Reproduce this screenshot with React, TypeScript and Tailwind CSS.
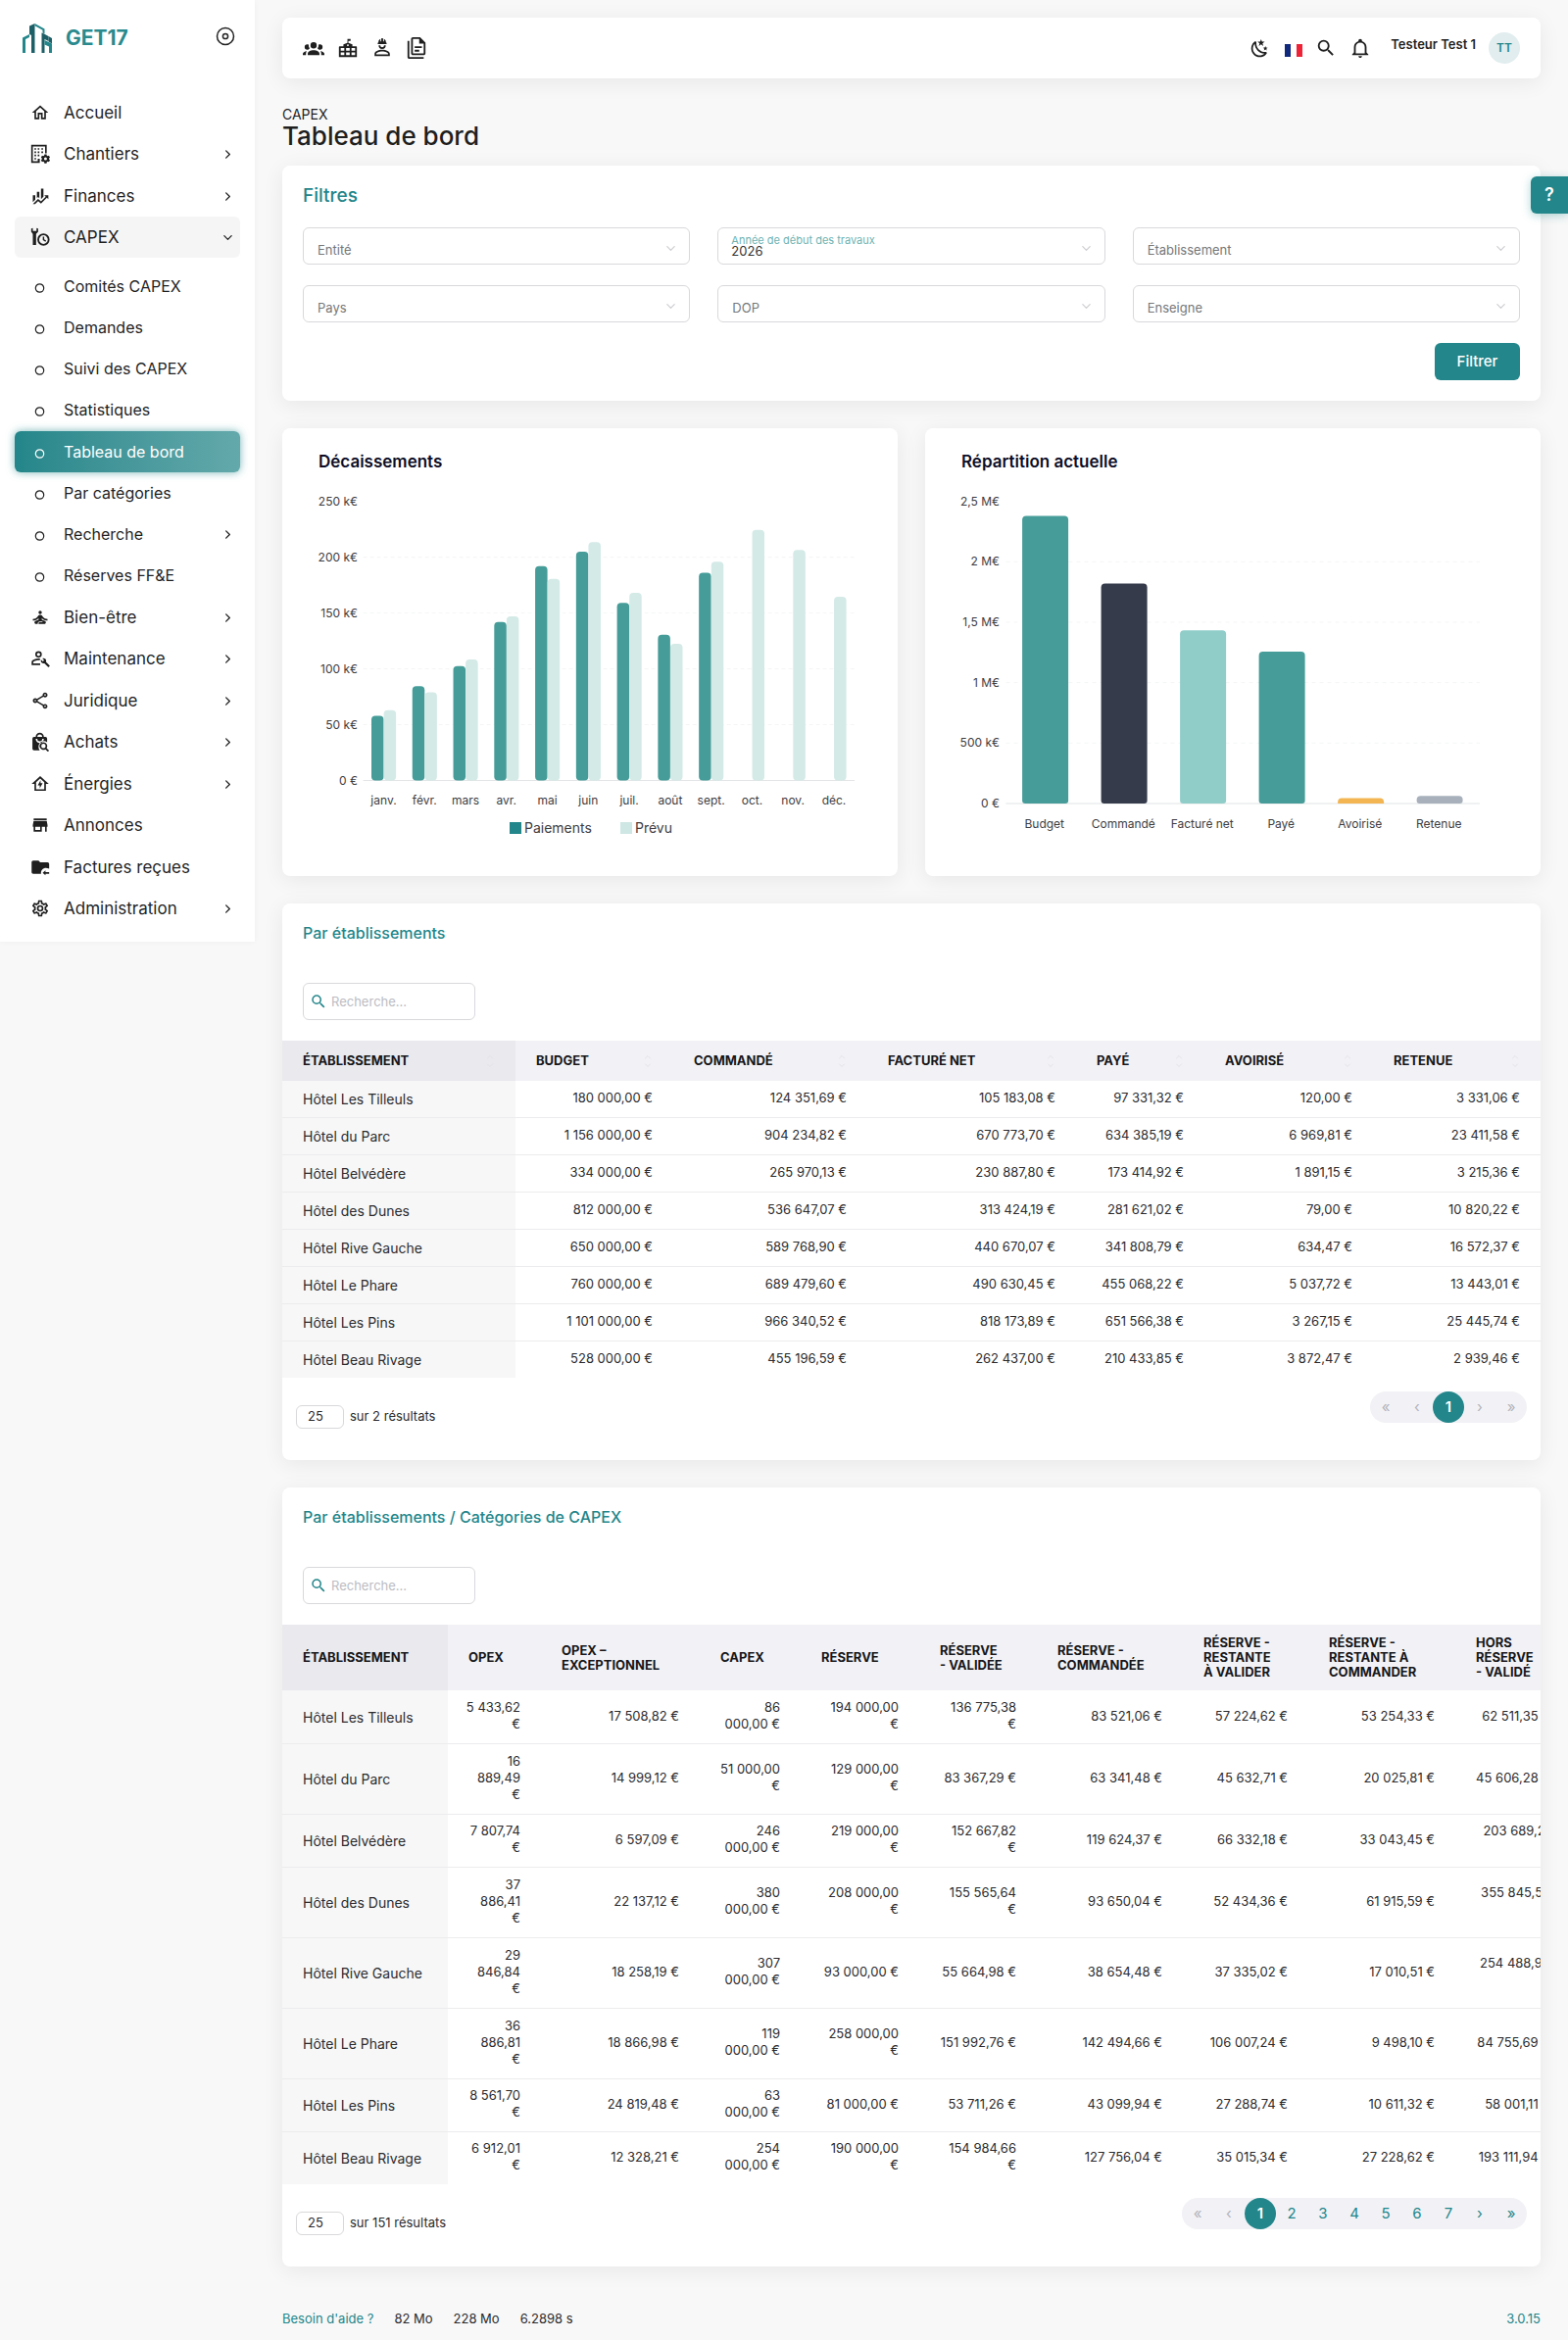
import React from "react";

const TEAL = "#23868a";

/* ---------- icons ---------- */

function Icon({ children, className = "size-5" }: { children: React.ReactNode; className?: string }) {
  return (
    <svg viewBox="0 0 24 24" fill="currentColor" aria-hidden="true" className={`${className} shrink-0`}>
      {children}
    </svg>
  );
}

const gearTeeth = "M17.2 12.5h2.6l.3 1.5 1.2.7 1.4-.5 1.3 2.2-1.1 1v1.3l1.1 1-1.3 2.2-1.4-.5-1.2.7-.3 1.5h-2.6l-.3-1.5-1.2-.7-1.4.5-1.3-2.2 1.1-1v-1.3l-1.1-1 1.3-2.2 1.4.5 1.2-.7zM18.5 16.2a1.8 1.8 0 1 0 0 3.6 1.8 1.8 0 0 0 0-3.6z";

const icons = {
  home: <path d="M12 5.69L17 10.19V18H15V12H9V18H7V10.19L12 5.69M12 3L2 12H5V20H11V14H13V20H19V12H22" />,
  building: (
    <>
      <path d="M1 1H20V11.5H18V3H3V21H9V18H11.5V23H1Z" />
      <path d="M5 5h2v2H5zM9 5h2v2H9zM13.500 5h2v2h-2zM5 9h2v2H5zM9 9h2v2H9zM13.500 9h2v2h-2zM5 13h2v2H5zM9 13h2v2H9zM5 17h2v2H5z" />
      <path fillRule="evenodd" d={gearTeeth} />
    </>
  ),
  finance: (
    <path d="M6,16.5L3,19.44V11H6M11,14.66L9.43,13.32L8,14.64V7H11M16,13L13,16V3H16M18.81,12.81L17,11H22V16L20.21,14.21L13,21.36L9.53,18.34L5.75,22H3L9.47,15.66L13,18.64" />
  ),
  wrenchClock: (
    <>
      <path d="M1 1.500V5.500L3 8V21.500H7V8L9.500 5.500V1.500L7.500 .8V4.500H3V.8Z" />
      <path fillRule="evenodd" d="M16 7.500a7.500 7.500 0 1 0 0 15 7.500 7.500 0 0 0 0-15zm0 2.200a5.300 5.300 0 1 1 0 10.600 5.300 5.300 0 0 1 0-10.600z" />
      <path d="M15.200 11.500h1.700v3.300l2.400 1.400-.9 1.400-3.200-1.900z" />
    </>
  ),
  meditation: (
    <path d="M12 4C13.11 4 14 4.89 14 6C14 7.11 13.11 8 12 8S10 7.11 10 6C10 4.9 10.9 4 12 4M21 16V14C18.76 14 16.84 13.04 15.4 11.32L14.06 9.72C13.68 9.26 13.12 9 12.53 9H11.5C10.89 9 10.33 9.26 9.95 9.72L8.61 11.32C7.16 13.04 5.24 14 3 14V16C5.77 16 8.19 14.83 10 12.75V15L6.12 16.55C5.45 16.82 5 17.5 5 18.21C5 19.2 5.8 20 6.79 20H9V19.5C9 18.12 10.12 17 11.5 17H14.5C14.78 17 15 17.22 15 17.5C15 17.78 14.78 18 14.5 18H11.5C10.67 18 10 18.67 10 19.5V20H17.21C18.2 20 19 19.2 19 18.21C19 17.5 18.55 16.82 17.88 16.55L14 15V12.75C15.81 14.83 18.23 16 21 16Z" />
  ),
  accountWrench: (
    <>
      <path fillRule="evenodd" d="M10 3a4 4 0 1 0 0 8 4 4 0 0 0 0-8zm0 2a2 2 0 1 1 0 4 2 2 0 0 1 0-4z" />
      <path d="M10 12c-3 0-8.500 1.500-8.500 4.500V20H12v-2H3.500v-1.500c0-.9 3.500-2.500 6.500-2.500h1.500l.5-1.900A12 12 0 0 0 10 12z" />
      <path d="M23.600 20.600l-4.500-4.500c.5-1.200.2-2.500-.7-3.400-1-1-2.500-1.200-3.700-.6l2.100 2.100-1.500 1.500-2.200-2.100c-.6 1.100-.3 2.700.7 3.600.9.900 2.300 1.200 3.400.7l4.600 4.500c.2.200.5.200.7 0l1.100-1.100c.3-.2.3-.6 0-.7z" />
    </>
  ),
  share: (
    <path
      fillRule="evenodd"
      d="M18 2C16.35 2 15 3.35 15 5C15 5.24 15.04 5.47 15.09 5.7L8.04 9.81C7.5 9.31 6.79 9 6 9C4.35 9 3 10.35 3 12C3 13.65 4.35 15 6 15C6.79 15 7.5 14.69 8.04 14.19L15.16 18.34C15.11 18.55 15.08 18.77 15.08 19C15.08 20.61 16.39 21.91 18 21.91C19.61 21.91 20.92 20.61 20.92 19C20.92 17.39 19.61 16.08 18 16.08C17.24 16.08 16.56 16.38 16.04 16.85L8.91 12.7C8.96 12.47 9 12.24 9 12C9 11.76 8.96 11.53 8.91 11.3L15.96 7.19C16.5 7.69 17.21 8 18 8C19.65 8 21 6.65 21 5C21 3.35 19.65 2 18 2M18 4C18.55 4 19 4.45 19 5C19 5.55 18.55 6 18 6C17.45 6 17 5.55 17 5C17 4.45 17.45 4 18 4M6 11C6.55 11 7 11.45 7 12C7 12.55 6.55 13 6 13C5.45 13 5 12.55 5 12C5 11.45 5.45 11 6 11M18 18C18.55 18 19 18.45 19 19C19 19.55 18.55 20 18 20C17.45 20 17 19.55 17 19C17 18.45 17.45 18 18 18Z"
    />
  ),
  shopping: (
    <>
      <path d="M11.500 1A5 5 0 0 0 6.500 6H4.500a2 2 0 0 0-2 2v12.500a2 2 0 0 0 2 2h7a7 7 0 0 1-1.500-4.800 6.500 6.500 0 0 1 10.500-5V8a2 2 0 0 0-2-2h-2a5 5 0 0 0-5-5zm0 2a3 3 0 0 1 3 3h-6a3 3 0 0 1 3-3zm-5 5.500h2a3 3 0 0 0 6 0h2a5 5 0 0 1-10 0z" />
      <path fillRule="evenodd" d="M16 12.500a4.700 4.700 0 1 0 2.400 8.700l3 3 1.500-1.500-3-3a4.700 4.700 0 0 0-3.900-7.200zm0 2a2.700 2.700 0 1 1 0 5.400 2.700 2.700 0 0 1 0-5.400z" />
    </>
  ),
  homeBolt: (
    <>
      <path fillRule="evenodd" d="M12 2.500L1.500 12H5V20.500H19V12H22.500L12 2.500M12 5.400L17 10V18.500H7V10L12 5.400Z" />
      <path d="M11.500 17.500V13.800H9L12.500 7.500V11.200H15L11.500 17.500Z" />
    </>
  ),
  store: <path d="M12,18H6V14H12M21,14V12L20,7H4L3,12V14H4V20H14V14H18V20H20V14M20,4H4V6H20V4Z" />,
  folder: (
    <>
      <path d="M13 19C13 19.34 13.04 19.67 13.09 20H3.500C2.400 20 1.500 19.110 1.500 18V6C1.500 4.890 2.390 4 3.500 4H10L12 6H21C22.100 6 23 6.890 23 8V13.810C21.500 13.300 20.100 13 19 13C15.690 13 13 15.690 13 19" />
      <path d="M18.500 16L15 19L18.500 22V20H23V18H18.500Z" />
    </>
  ),
  cog: (
    <path d="M12,8A4,4 0 0,1 16,12A4,4 0 0,1 12,16A4,4 0 0,1 8,12A4,4 0 0,1 12,8M12,10A2,2 0 0,0 10,12A2,2 0 0,0 12,14A2,2 0 0,0 14,12A2,2 0 0,0 12,10M10,22C9.75,22 9.54,21.82 9.5,21.58L9.13,18.93C8.5,18.68 7.96,18.34 7.44,17.94L4.95,18.95C4.73,19.03 4.46,18.95 4.34,18.73L2.34,15.27C2.21,15.05 2.27,14.78 2.46,14.63L4.57,12.97L4.5,12L4.57,11L2.46,9.37C2.27,9.22 2.21,8.95 2.34,8.73L4.34,5.27C4.46,5.05 4.73,4.96 4.95,5.05L7.44,6.05C7.96,5.66 8.5,5.32 9.13,5.07L9.5,2.42C9.54,2.18 9.75,2 10,2H14C14.25,2 14.46,2.18 14.5,2.42L14.87,5.07C15.5,5.32 16.04,5.66 16.56,6.05L19.05,5.05C19.27,4.96 19.54,5.05 19.66,5.27L21.66,8.73C21.79,8.95 21.73,9.22 21.54,9.37L19.43,11L19.5,12L19.43,13L21.54,14.63C21.73,14.78 21.79,15.05 21.66,15.27L19.66,18.73C19.54,18.95 19.27,19.04 19.05,18.95L16.56,17.95C16.04,18.34 15.5,18.68 14.87,18.93L14.5,21.58C14.46,21.82 14.25,22 14,22H10M11.25,4L10.88,6.61C9.68,6.86 8.62,7.5 7.85,8.39L5.44,7.35L4.69,8.65L6.8,10.2C6.4,11.37 6.4,12.64 6.8,13.8L4.68,15.36L5.43,16.66L7.86,15.62C8.63,16.5 9.68,17.14 10.87,17.38L11.24,20H12.76L13.13,17.39C14.32,17.14 15.37,16.5 16.14,15.62L18.57,16.66L19.32,15.36L17.2,13.81C17.6,12.64 17.6,11.37 17.2,10.2L19.31,8.65L18.56,7.35L16.15,8.39C15.38,7.5 14.32,6.86 13.12,6.62L12.75,4H11.25Z" />
  ),
  group: (
    <path d="M12,5.5A3.5,3.5 0 0,1 15.5,9A3.5,3.5 0 0,1 12,12.5A3.5,3.5 0 0,1 8.5,9A3.5,3.5 0 0,1 12,5.5M5,8C5.56,8 6.08,8.15 6.53,8.42C6.38,9.85 6.8,11.27 7.66,12.38C7.16,13.34 6.16,14 5,14A3,3 0 0,1 2,11A3,3 0 0,1 5,8M19,8A3,3 0 0,1 22,11A3,3 0 0,1 19,14C17.84,14 16.84,13.34 16.34,12.38C17.2,11.27 17.62,9.85 17.47,8.42C17.92,8.15 18.44,8 19,8M5.5,18.25C5.5,16.18 8.41,14.5 12,14.5C15.59,14.5 18.5,16.18 18.5,18.25V20H5.5V18.25M0,20V18.5C0,17.11 1.89,15.94 4.45,15.6C3.86,16.28 3.5,17.22 3.5,18.25V20H0M24,20H20.5V18.25C20.5,17.22 20.14,16.28 19.55,15.6C22.11,15.94 24,17.11 24,18.5V20Z" />
  ),
  townHall: (
    <path
      fillRule="evenodd"
      d="M21 10H17V8L12.5 6.2V4H15V2H11.5V6.2L7 8V10H3C2.45 10 2 10.45 2 11V22H22V11C22 10.45 21.55 10 21 10M8 20H4V17H8V20M8 15H4V12H8V15M12 8C12.55 8 13 8.45 13 9S12.55 10 12 10 11 9.55 11 9 11.45 8 12 8M14 20H10V17H14V20M14 15H10V12H14V15M20 20H16V17H20V20M20 15H16V12H20V15Z"
    />
  ),
  hardHat: (
    <>
      <path fillRule="evenodd" d="M12 14C7.6 14 3.500 15.800 3.500 18.500V21H20.500V18.500C20.500 15.800 16.400 14 12 14M5.400 19.100V18.500C5.400 17.300 8.600 15.900 12 15.900S18.600 17.300 18.600 18.500V19.100Z" />
      <path d="M8 9A4 4 0 0 0 16 9H14.100A2.100 2.100 0 0 1 9.900 9Z" />
      <path d="M11.5 1C11.2 1 11 1.21 11 1.5V4.5H10V2C10 2 7.75 2.86 7.75 5.75C7.75 5.75 7 5.89 7 7.500H17C16.95 5.89 16.25 5.75 16.25 5.75C16.25 2.86 14 2 14 2V4.5H13V1.5C13 1.21 12.81 1 12.5 1H11.5Z" />
    </>
  ),
  files: (
    <path
      fillRule="evenodd"
      d="M16 0H8C6.9 0 6 .9 6 2V18C6 19.1 6.9 20 8 20H20C21.1 20 22 19.1 22 18V6L16 0M20 18H8V2H15V7H20V18M4 4V22H20V24H4C2.9 24 2 23.1 2 22V4H4M10 10V12H18V10H10M10 14V16H15V14H10Z"
    />
  ),
  moon: (
    <path d="M17.75,4.09L15.22,6.03L16.13,9.09L13.5,7.28L10.87,9.09L11.78,6.03L9.25,4.09L12.44,4L13.5,1L14.56,4L17.75,4.09M21.25,11L19.61,12.25L20.2,14.23L18.5,13.06L16.8,14.23L17.39,12.25L15.75,11L17.81,10.95L18.5,9L19.19,10.95L21.25,11M18.97,15.95C19.8,15.87 20.69,17.05 20.16,17.8C19.84,18.25 19.5,18.67 19.08,19.07C15.17,23 8.84,23 4.94,19.07C1.03,15.17 1.03,8.83 4.94,4.93C5.34,4.53 5.76,4.17 6.21,3.85C6.96,3.32 8.14,4.21 8.06,5.04C7.79,7.9 8.75,10.87 10.95,13.06C13.14,15.26 16.1,16.22 18.97,15.95M17.33,17.97C14.5,17.81 11.7,16.64 9.53,14.5C7.36,12.31 6.2,9.5 6.04,6.68C3.23,9.82 3.34,14.64 6.35,17.66C9.37,20.67 14.19,20.78 17.33,17.97Z" />
  ),
  magnify: (
    <path d="M9.5,3A6.5,6.5 0 0,1 16,9.5C16,11.11 15.41,12.59 14.44,13.73L14.71,14H15.5L20.5,19L19,20.5L14,15.5V14.71L13.73,14.44C12.59,15.41 11.11,16 9.5,16A6.5,6.5 0 0,1 3,9.5A6.5,6.5 0 0,1 9.5,3M9.5,5C7,5 5,7 5,9.5C5,12 7,14 9.5,14C12,14 14,12 14,9.5C14,7 12,5 9.5,5Z" />
  ),
  bell: (
    <path
      fillRule="evenodd"
      d="M10 21H14C14 22.1 13.1 23 12 23S10 22.1 10 21M21 19V20H3V19L5 17V11C5 7.9 7 5.2 10 4.3V4C10 2.9 10.9 2 12 2S14 2.9 14 4V4.3C17 5.2 19 7.9 19 11V17L21 19M17 11C17 8.2 14.8 6 12 6S7 8.2 7 11V18H17V11Z"
    />
  ),
};

function Chevron({ className, down = false }: { className: string; down?: boolean }) {
  return (
    <svg viewBox="0 0 12 12" fill="none" stroke="currentColor" strokeWidth="1.400" strokeLinecap="round" strokeLinejoin="round" aria-hidden="true" className={className}>
      <path d={down ? "M2 4l4 4 4-4" : "M4 2l4 4-4 4"} />
    </svg>
  );
}

/* ---------- sidebar ---------- */

type NavEntry = { label: string; icon?: keyof typeof icons; more?: boolean };

const mainNav: NavEntry[] = [
  { label: "Accueil", icon: "home" },
  { label: "Chantiers", icon: "building", more: true },
  { label: "Finances", icon: "finance", more: true },
  { label: "CAPEX", icon: "wrenchClock", more: true },
  { label: "Bien-être", icon: "meditation", more: true },
  { label: "Maintenance", icon: "accountWrench", more: true },
  { label: "Juridique", icon: "share", more: true },
  { label: "Achats", icon: "shopping", more: true },
  { label: "Énergies", icon: "homeBolt", more: true },
  { label: "Annonces", icon: "store" },
  { label: "Factures reçues", icon: "folder" },
  { label: "Administration", icon: "cog", more: true },
];

const capexNav: NavEntry[] = [
  { label: "Comités CAPEX" },
  { label: "Demandes" },
  { label: "Suivi des CAPEX" },
  { label: "Statistiques" },
  { label: "Tableau de bord" },
  { label: "Par catégories" },
  { label: "Recherche", more: true },
  { label: "Réserves FF&E" },
];

function NavRow({ item, open = false, active = false }: { item: NavEntry; open?: boolean; active?: boolean }) {
  const tone = active
    ? "bg-linear-to-r from-[#23868a] to-[#63a9ab] text-white shadow-[0_0_8px_rgba(35,134,138,0.6)]"
    : open
      ? "bg-[#f5f5f5] text-[#1f1f1f]"
      : "text-[#1f1f1f]";
  const size = item.icon ? "text-[17px]" : "text-base";
  return (
    <a href="#" className={`flex h-[42px] items-center gap-3.5 rounded-md pr-[7px] pl-4 ${size} leading-6 ${tone}`}>
      {item.icon ? (
        <Icon>{icons[item.icon]}</Icon>
      ) : (
        <svg viewBox="0 0 20 20" fill="none" stroke="currentColor" strokeWidth="1.200" aria-hidden="true" className="size-5 shrink-0">
          <circle cx="9.500" cy="12" r="4.200" />
        </svg>
      )}
      <span className="flex-1">{item.label}</span>
      {item.more && <Chevron down={open} className="size-[11px]" />}
    </a>
  );
}

function Logo() {
  return (
    <svg viewBox="0 0 30 30" aria-hidden="true" className="size-[30px]">
      <path fill="#23868a" d="M0 30V14.500L7 11V14L3 16V30Z" />
      <path fill="#1d5f66" d="M7 11V2.500L12.500 0V30H9V12Z" />
      <path fill="#23868a" d="M12.500 0L22.500 5.500V10.500L20.500 9.500V6.700L12.500 2.300Z" />
      <path fill="#1d5f66" d="M19.500 30V9.500L21 10l5.500 3V18L22.500 16V30Z" />
      <path fill="#23868a" d="M22.500 17L30 20.500V30H27V23.500L22.500 21.500Z" />
      <path fill="#1d5f66" d="M26.500 13L30 15V20.500L26.500 18.500Z" />
    </svg>
  );
}

function Sidebar() {
  return (
    <aside className="w-[260px] shrink-0 bg-white pb-3 shadow-[0_0_6px_rgba(0,0,0,0.04)]">
      <div className="flex h-[94px] items-start pt-6 pr-5 pl-[23px]">
        <a href="#" className="flex items-center gap-3.5">
          <Logo />
          <span className="text-[21px] leading-[30px] font-bold text-[#2a8a8d]">GET17</span>
        </a>
        <button type="button" aria-label="Épingler le menu" className="mt-[3px] ml-auto">
          <svg viewBox="0 0 20 20" fill="none" stroke="#222" strokeWidth="1.500" className="size-5">
            <circle cx="10" cy="10" r="8.500" />
            <circle cx="10" cy="10" r="2.600" />
          </svg>
        </button>
      </div>
      <nav aria-label="Menu principal">
        <ul className="px-[15px]">
          {mainNav.map((item) => (
            <li key={item.label} className="even:mb-px">
              <NavRow item={item} open={item.label === "CAPEX"} />
              {item.label === "CAPEX" && (
                <ul className="pt-2">
                  {capexNav.map((sub) => (
                    <li key={sub.label} className="nth-[4n]:mb-px">
                      <NavRow item={sub} active={sub.label === "Tableau de bord"} />
                    </li>
                  ))}
                </ul>
              )}
            </li>
          ))}
        </ul>
      </nav>
    </aside>
  );
}

/* ---------- top bar ---------- */

function TopBar() {
  return (
    <header className="flex h-[62px] items-center rounded-lg bg-white px-[21px] text-[#1f1f1f] shadow-[0_4px_22px_rgba(0,0,0,0.07)]">
      <div className="flex items-center gap-[13px]">
        <button type="button" aria-label="Utilisateurs"><Icon className="size-[22px]">{icons.group}</Icon></button>
        <button type="button" aria-label="Établissements"><Icon className="size-[22px]">{icons.townHall}</Icon></button>
        <button type="button" aria-label="Intervenants"><Icon className="size-[22px]">{icons.hardHat}</Icon></button>
        <button type="button" aria-label="Documents"><Icon className="size-[22px]">{icons.files}</Icon></button>
      </div>
      <div className="ml-auto flex items-center gap-[13px]">
        <button type="button" aria-label="Thème sombre"><Icon className="size-[21px]">{icons.moon}</Icon></button>
        <button type="button" aria-label="Langue : français" className="mt-1 ml-0.5">
          <svg viewBox="0 0 18 13" className="h-[13px] w-[18px]">
            <path fill="#10297d" d="M0 0h6v13H0z" />
            <path fill="#fff" d="M6 0h6v13H6z" />
            <path fill="#ee2436" d="M12 0h6v13h-6z" />
          </svg>
        </button>
        <button type="button" aria-label="Rechercher"><Icon className="size-[22px]">{icons.magnify}</Icon></button>
        <button type="button" aria-label="Notifications"><Icon className="size-[22px]">{icons.bell}</Icon></button>
        <span className="mb-1.5 ml-[7px] text-[13px] font-semibold">Testeur Test 1</span>
        <span className="grid size-8 place-items-center rounded-full bg-[#e1edee] text-xs font-semibold text-[#23868a]">TT</span>
      </div>
    </header>
  );
}

/* ---------- filters ---------- */

const filters = [
  { id: "entite", label: "Entité" },
  { id: "annee", label: "Année de début des travaux", value: "2026" },
  { id: "etablissement", label: "Établissement" },
  { id: "pays", label: "Pays" },
  { id: "dop", label: "DOP" },
  { id: "enseigne", label: "Enseigne" },
];

function Filters() {
  return (
    <section className="rounded-lg bg-white p-[21px] shadow-[0_4px_22px_rgba(0,0,0,0.07)]">
      <h2 className="text-[19px] leading-5 font-medium text-[#23868a]">Filtres</h2>
      <form className="mt-[22px]">
        <div className="grid grid-cols-3 gap-x-7 gap-y-[21px]">
          {filters.map((f) => (
            <div key={f.id} className="relative">
              <select
                id={f.id}
                defaultValue={f.value ?? ""}
                className="h-[38px] w-full appearance-none rounded-md border border-[#d9d9dc] bg-white pt-3 pl-[13px] text-[13px] text-[#333]"
              >
                <option value={f.value ?? ""}>{f.value ?? ""}</option>
              </select>
              <label
                htmlFor={f.id}
                className={
                  f.value
                    ? "pointer-events-none absolute top-[7px] left-3.5 text-[11px] leading-3 text-[#6db3b2]"
                    : "pointer-events-none absolute top-[15px] left-[15px] text-[13px] leading-4 text-[#777]"
                }
              >
                {f.label}
              </label>
              <Chevron down className="pointer-events-none absolute top-4 right-3.5 size-[11px] text-[#cfcfd3]" />
            </div>
          ))}
        </div>
        <div className="mt-[21px] flex justify-end">
          <button type="button" className="h-[38px] w-[87px] rounded-md bg-[#23868a] text-[15px] font-medium text-white">Filtrer</button>
        </div>
      </form>
    </section>
  );
}

/* ---------- charts ---------- */

const months = ["janv.", "févr.", "mars", "avr.", "mai", "juin", "juil.", "août", "sept.", "oct.", "nov.", "déc."];
const paid = [58, 84.5, 102.5, 142, 192, 205, 159, 130.5, 186, 0, 0, 0];
const planned = [63, 79, 108.5, 147, 180.5, 213.5, 168, 122.5, 196, 224.5, 206.5, 164.5];

function ChartCard({ title, children }: { title: string; children: React.ReactNode }) {
  return (
    <section className="rounded-lg bg-white px-5 pt-[22px] pb-[21px] shadow-[0_4px_22px_rgba(0,0,0,0.07)]">
      <h2 className="pl-[17px] text-[17px] leading-6 font-semibold text-[#0d0d26]">{title}</h2>
      <div className="mt-2.5">{children}</div>
    </section>
  );
}

function PaymentsChart() {
  const zero = 303.5;
  const scale = 284.8 / 250;
  const left = 62.6;
  const step = 41.77;
  const bar = 12.5;
  return (
    <svg viewBox="0 0 588 380" className="block w-full" role="img" aria-label="Décaissements par mois">
      {[0, 50, 100, 150, 200, 250].map((v) => {
        const y = zero - v * scale;
        return (
          <g key={v}>
            <text x="57" y={y + 4} textAnchor="end" fontSize="12" fill="#3d3d42">{v === 0 ? "0 €" : `${v} k€`}</text>
            {v < 250 && (
              <line x1={left} x2="564" y1={y} y2={y} stroke={v === 0 ? "#e3e5e6" : "#f4f5f5"} strokeDasharray={v === 0 ? undefined : "4 3"} />
            )}
          </g>
        );
      })}
      {months.map((m, i) => {
        const x = left + i * step + 8.4;
        return (
          <g key={m}>
            {paid[i] > 0 && <rect x={x} y={zero - paid[i] * scale} width={bar} height={paid[i] * scale} rx="4" fill="#459c98" />}
            <rect x={x + 12.6} y={zero - planned[i] * scale} width={bar} height={planned[i] * scale} rx="4" fill="#d4eae7" />
            <text x={left + (i + 0.5) * step} y="328" textAnchor="middle" fontSize="12" fill="#3d3d42">{m}</text>
          </g>
        );
      })}
      <rect x="212" y="346" width="12" height="12" fill={TEAL} />
      <text x="227" y="357" fontSize="14" fill="#3d3d42">Paiements</text>
      <rect x="325" y="346" width="12" height="12" fill="#cfe7e4" />
      <text x="340" y="357" fontSize="14" fill="#3d3d42">Prévu</text>
    </svg>
  );
}

const split = [
  { label: "Budget", value: 2380, color: "#459c98" },
  { label: "Commandé", value: 1820, color: "#353b4a" },
  { label: "Facturé net", value: 1432, color: "#90cdc9" },
  { label: "Payé", value: 1256, color: "#459c98" },
  { label: "Avoirisé", value: 44, color: "#f2b552" },
  { label: "Retenue", value: 62, color: "#a7b0bb" },
];

function SplitChart() {
  const zero = 327;
  const scale = 308.4 / 2500;
  const left = 62.5;
  const step = 80.5;
  const ticks: [number, string][] = [[0, "0 €"], [500, "500 k€"], [1000, "1 M€"], [1500, "1,5 M€"], [2000, "2 M€"], [2500, "2,5 M€"]];
  return (
    <svg viewBox="0 0 588 380" className="block w-full" role="img" aria-label="Répartition actuelle">
      {ticks.map(([v, label]) => {
        const y = zero - v * scale;
        return (
          <g key={v}>
            <text x="56" y={y + 4} textAnchor="end" fontSize="12" fill="#3d3d42">{label}</text>
            {v < 2500 && (
              <line x1={left} x2="546" y1={y} y2={y} stroke={v === 0 ? "#dfe2e4" : "#f4f5f5"} strokeDasharray={v === 0 ? undefined : "4 4"} />
            )}
          </g>
        );
      })}
      {split.map((s, i) => {
        const h = s.value * scale;
        const x = left + i * step + 16.6;
        const bottom = h > 7 ? 3 : 0;
        return (
          <g key={s.label}>
            <path
              fill={s.color}
              d={`M${x} ${zero - bottom}V${zero - h + 4}q0 -4 4 -4h39q4 0 4 4V${zero - bottom}${bottom ? "q0 3 -3 3h-41q-3 0 -3 -3" : ""}Z`}
            />
            <text x={left + (i + 0.5) * step - 1} y="352" textAnchor="middle" fontSize="12" fill="#3d3d42">{s.label}</text>
          </g>
        );
      })}
    </svg>
  );
}

/* ---------- tables ---------- */

const hotels = ["Hôtel Les Tilleuls", "Hôtel du Parc", "Hôtel Belvédère", "Hôtel des Dunes", "Hôtel Rive Gauche", "Hôtel Le Phare", "Hôtel Les Pins", "Hôtel Beau Rivage"];

const summary = {
  widths: [238, 161, 198, 213, 131, 172, 171],
  heads: ["ÉTABLISSEMENT", "BUDGET", "COMMANDÉ", "FACTURÉ NET", "PAYÉ", "AVOIRISÉ", "RETENUE"],
  rows: [
    ["180 000,00 €", "124 351,69 €", "105 183,08 €", "97 331,32 €", "120,00 €", "3 331,06 €"],
    ["1 156 000,00 €", "904 234,82 €", "670 773,70 €", "634 385,19 €", "6 969,81 €", "23 411,58 €"],
    ["334 000,00 €", "265 970,13 €", "230 887,80 €", "173 414,92 €", "1 891,15 €", "3 215,36 €"],
    ["812 000,00 €", "536 647,07 €", "313 424,19 €", "281 621,02 €", "79,00 €", "10 820,22 €"],
    ["650 000,00 €", "589 768,90 €", "440 670,07 €", "341 808,79 €", "634,47 €", "16 572,37 €"],
    ["760 000,00 €", "689 479,60 €", "490 630,45 €", "455 068,22 €", "5 037,72 €", "13 443,01 €"],
    ["1 101 000,00 €", "966 340,52 €", "818 173,89 €", "651 566,38 €", "3 267,15 €", "25 445,74 €"],
    ["528 000,00 €", "455 196,59 €", "262 437,00 €", "210 433,85 €", "3 872,47 €", "2 939,46 €"],
  ],
};

const categories = {
  widths: [169, 95, 162, 103, 121, 120, 149, 128, 150, 118],
  heads: ["ÉTABLISSEMENT", "OPEX", "OPEX –\nEXCEPTIONNEL", "CAPEX", "RÉSERVE", "RÉSERVE\n- VALIDÉE", "RÉSERVE -\nCOMMANDÉE", "RÉSERVE -\nRESTANTE\nÀ VALIDER", "RÉSERVE -\nRESTANTE À\nCOMMANDER", "HORS\nRÉSERVE\n- VALIDÉ"],
  rows: [
    ["5 433,62\n€", "17 508,82 €", "86\n000,00 €", "194 000,00\n€", "136 775,38\n€", "83 521,06 €", "57 224,62 €", "53 254,33 €", "62 511,35 €"],
    ["16\n889,49\n€", "14 999,12 €", "51 000,00\n€", "129 000,00\n€", "83 367,29 €", "63 341,48 €", "45 632,71 €", "20 025,81 €", "45 606,28 €"],
    ["7 807,74\n€", "6 597,09 €", "246\n000,00 €", "219 000,00\n€", "152 667,82\n€", "119 624,37 €", "66 332,18 €", "33 043,45 €", "203 689,21\n€"],
    ["37\n886,41\n€", "22 137,12 €", "380\n000,00 €", "208 000,00\n€", "155 565,64\n€", "93 650,04 €", "52 434,36 €", "61 915,59 €", "355 845,52\n€"],
    ["29\n846,84\n€", "18 258,19 €", "307\n000,00 €", "93 000,00 €", "55 664,98 €", "38 654,48 €", "37 335,02 €", "17 010,51 €", "254 488,90\n€"],
    ["36\n886,81\n€", "18 866,98 €", "119\n000,00 €", "258 000,00\n€", "151 992,76 €", "142 494,66 €", "106 007,24 €", "9 498,10 €", "84 755,69 €"],
    ["8 561,70\n€", "24 819,48 €", "63\n000,00 €", "81 000,00 €", "53 711,26 €", "43 099,94 €", "27 288,74 €", "10 611,32 €", "58 001,11 €"],
    ["6 912,01\n€", "12 328,21 €", "254\n000,00 €", "190 000,00\n€", "154 984,66\n€", "127 756,04 €", "35 015,34 €", "27 228,62 €", "193 111,94 €"],
  ],
};

function SortArrows() {
  return (
    <svg viewBox="0 0 8 14" fill="none" stroke="#e2e2e8" strokeLinecap="round" aria-hidden="true" className="absolute top-1/2 right-[22px] h-3.5 w-2 -translate-y-1/2">
      <path d="M1.500 4L4 1.500 6.500 4M1.500 10L4 12.500 6.500 10" />
    </svg>
  );
}

type Data = { widths: number[]; heads: string[]; rows: string[][] };

function DataTable({ data, fluid = false }: { data: Data; fluid?: boolean }) {
  const total = data.widths.reduce((a, b) => a + b, 0);
  return (
    <div className="overflow-x-auto [scrollbar-width:none]">
      <table className="w-full table-fixed text-[13px] leading-[17px] text-[#2b2b2e]" style={{ minWidth: fluid ? undefined : total }}>
        <colgroup>
          {data.widths.map((w, i) => <col key={i} style={{ width: w }} />)}
        </colgroup>
        <thead>
          <tr>
            {data.heads.map((h, i) => (
              <th
                key={h}
                scope="col"
                className={`relative h-[41px] py-[11px] pl-[21px] text-left text-[13px] leading-[15px] font-bold whitespace-pre text-[#17171a] ${i === 0 ? "bg-[#e9e9ee]" : "bg-[#f2f2f6]"}`}
              >
                {h}
                {fluid && <SortArrows />}
              </th>
            ))}
          </tr>
        </thead>
        <tbody>
          {data.rows.map((row, r) => {
            const tall = row.some((cell) => cell.split("\n").length > 2);
            const line = r > 0 ? "shadow-[inset_0_1px_0_#ececee]" : "";
            return (
              <tr key={hotels[r]} className={tall ? "h-[72px]" : "h-[38px] first:h-[37px]"}>
                <th scope="row" className={`bg-[#f7f7f7] pl-[21px] text-left text-sm leading-[17px] font-normal ${line}`}>{hotels[r]}</th>
                {row.map((cell, c) => (
                  <td key={c} className={`pt-[9px] pr-[21px] pb-[11px] text-right whitespace-pre ${line}`}>{cell}</td>
                ))}
              </tr>
            );
          })}
        </tbody>
      </table>
    </div>
  );
}

function Pagination({ pages, more }: { pages: number[]; more: boolean }) {
  const step = more ? "text-[#23868a]" : "text-[#b3b3bb]";
  return (
    <nav aria-label="Pagination" className="ml-auto flex rounded-full bg-[#f2f2f6] text-[15px] text-[#23868a]">
      <button type="button" aria-label="Première page" className="size-8 text-[#b3b3bb]">«</button>
      <button type="button" aria-label="Page précédente" className="size-8 text-[#b3b3bb]">‹</button>
      {pages.map((p) => (
        <button key={p} type="button" className={`size-8 rounded-full ${p === 1 ? "bg-[#23868a] font-semibold text-white" : ""}`}>{p}</button>
      ))}
      <button type="button" aria-label="Page suivante" className={`size-8 ${step}`}>›</button>
      <button type="button" aria-label="Dernière page" className={`size-8 ${step}`}>»</button>
    </nav>
  );
}

function TableCard({ id, title, count, pages, more, children }: { id: string; title: string; count: number; pages: number[]; more: boolean; children: React.ReactNode }) {
  return (
    <section className="rounded-lg bg-white shadow-[0_4px_22px_rgba(0,0,0,0.07)]">
      <div className="px-[21px] pt-5 pb-[21px]">
        <h2 className="text-base leading-5 font-medium text-[#23868a]">{title}</h2>
        <div className="relative mt-[41px] w-[176px]">
          <Icon className="absolute top-2.5 left-[7px] size-[18px] text-[#23868a]">{icons.magnify}</Icon>
          <input
            type="search"
            aria-label={`Recherche ${title}`}
            placeholder="Recherche..."
            className="h-[38px] w-full rounded-md border border-[#d9d9dc] pl-7 text-[13px] placeholder:text-[#bcbcc2]"
          />
        </div>
      </div>
      {children}
      <div className="flex items-start px-3.5 pt-3.5 pb-8">
        <div className="mt-3.5 flex items-center gap-1.5 text-[13px] text-[#2b2b2e]">
          <select id={id} defaultValue="25" className="h-6 w-[49px] appearance-none rounded-md border border-[#d9d9dc] bg-white pl-[11px] text-[13px]">
            <option value="25">25</option>
          </select>
          <label htmlFor={id}>sur {count} résultats</label>
        </div>
        <Pagination pages={pages} more={more} />
      </div>
    </section>
  );
}

/* ---------- page ---------- */

export default function App() {
  return (
    <div className="relative flex min-h-screen items-start bg-[#f8f8f8] font-['Inter',sans-serif]">
      <Sidebar />
      <div className="min-w-0 flex-1 px-7 pt-[18px]">
        <TopBar />
        <main>
          <div className="mt-[29px] mb-4 text-[#1f1f1f]">
            <p className="text-sm leading-4">CAPEX</p>
            <h1 className="text-[26px] leading-7 font-medium">Tableau de bord</h1>
          </div>
          <div className="grid grid-cols-1 gap-7">
            <Filters />
            <div className="grid grid-cols-2 gap-7">
              <ChartCard title="Décaissements"><PaymentsChart /></ChartCard>
              <ChartCard title="Répartition actuelle"><SplitChart /></ChartCard>
            </div>
            <TableCard id="size-summary" title="Par établissements" count={2} pages={[1]} more={false}>
              <DataTable data={summary} fluid />
            </TableCard>
            <TableCard id="size-categories" title="Par établissements / Catégories de CAPEX" count={151} pages={[1, 2, 3, 4, 5, 6, 7]} more>
              <DataTable data={categories} />
            </TableCard>
          </div>
        </main>
        <footer className="mt-[43px] flex gap-[21px] pb-2 text-[13px] leading-5 text-[#2b2b2e]">
          <a href="#" className="text-[#23868a]">Besoin d'aide ?</a>
          <span>82 Mo</span>
          <span>228 Mo</span>
          <span>6.2898 s</span>
          <span className="ml-auto text-[#23868a]">3.0.15</span>
        </footer>
      </div>
      <button type="button" aria-label="Aide" className="absolute top-[180px] right-0 h-[38px] w-[38px] rounded-l-md bg-[#23868a] text-lg font-semibold text-white shadow-[0_2px_10px_rgba(35,134,138,0.35)]">
        ?
      </button>
    </div>
  );
}
